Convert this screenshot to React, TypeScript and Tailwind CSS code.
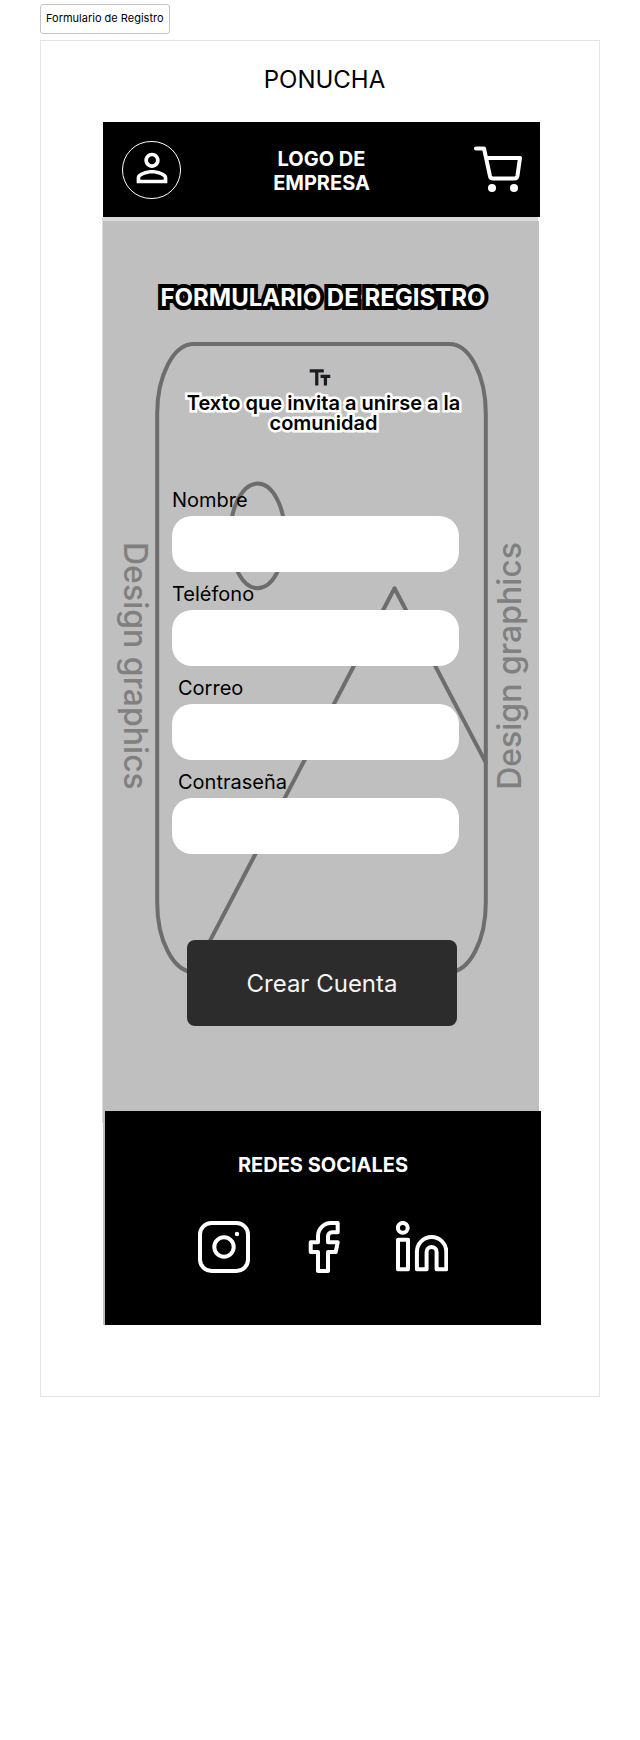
import React from "react";

type Field = {
  id: string;
  label: string;
  type: string;
  labelClass: string;
};

const fields: Field[] = [
  { id: "nombre", label: "Nombre", type: "text", labelClass: "" },
  { id: "telefono", label: "Teléfono", type: "tel", labelClass: "" },
  { id: "correo", label: "Correo", type: "email", labelClass: "pl-1.5" },
  { id: "contrasena", label: "Contraseña", type: "password", labelClass: "pl-1.5" },
];

function PersonIcon() {
  return (
    <svg viewBox="0 0 24 24" className="h-[46px] w-[46px]" fill="currentColor" aria-hidden="true">
      <path d="M12 5.9c1.16 0 2.1.94 2.1 2.1s-.94 2.1-2.1 2.1S9.9 9.16 9.9 8s.94-2.1 2.1-2.1m0 9c2.97 0 6.1 1.46 6.1 2.1v1.1H5.9V17c0-.64 3.13-2.1 6.1-2.1M12 4C9.79 4 8 5.79 8 8s1.79 4 4 4 4-1.79 4-4-1.79-4-4-4zm0 9c-2.67 0-8 1.34-8 4v3h16v-3c0-2.66-5.33-4-8-4z" />
    </svg>
  );
}

function CartIcon() {
  return (
    <svg viewBox="0 0 48 48" className="h-12 w-12" fill="none" aria-hidden="true">
      <path
        d="M2 2.5h8L16 30.2a3 3 0 0 0 2.9 2.3h21.6a3 3 0 0 0 2.9-2.4L46 12H12.4"
        stroke="currentColor"
        strokeWidth="4"
        strokeLinecap="round"
        strokeLinejoin="round"
      />
      <circle cx="18" cy="42" r="4" fill="currentColor" />
      <circle cx="40" cy="42" r="4" fill="currentColor" />
    </svg>
  );
}

function TextSizeIcon() {
  return (
    <svg viewBox="0 0 24 24" className="h-[26px] w-[26px]" fill="#1d1b20" aria-hidden="true">
      <path d="M2.5 4v3h5v12h3V7h5V4h-13zm19 5h-9v3h3v7h3v-7h3V9z" />
    </svg>
  );
}

function ImageBackdrop() {
  return (
    <svg
      viewBox="2.88 2.94 18.24 18.12"
      preserveAspectRatio="none"
      className="absolute inset-x-0 top-0 h-[632px] w-full"
      fill="none"
      stroke="#6d6d6d"
      strokeWidth="4"
      strokeLinecap="round"
      strokeLinejoin="round"
      aria-hidden="true"
    >
      <rect x="3" y="3" width="18" height="18" rx="2" ry="2" vectorEffect="non-scaling-stroke" />
      <circle cx="8.5" cy="8.5" r="1.5" vectorEffect="non-scaling-stroke" />
      <path d="M21 15 16 10 5 21" vectorEffect="non-scaling-stroke" />
    </svg>
  );
}

function SocialIcon({ children }: { children: React.ReactNode }) {
  return (
    <svg
      viewBox="0 0 52 52"
      className="h-[52px] w-[52px]"
      fill="none"
      stroke="currentColor"
      strokeWidth="4"
      strokeLinecap="round"
      strokeLinejoin="round"
      aria-hidden="true"
    >
      {children}
    </svg>
  );
}

function SideText({ flipped = false }: { flipped?: boolean }) {
  return (
    <p
      className={
        flipped
          ? "rotate-180 whitespace-nowrap text-[32px] leading-10 font-medium text-[#808080] [writing-mode:vertical-rl]"
          : "whitespace-nowrap text-[32px] leading-10 font-medium text-[#808080] [writing-mode:vertical-rl]"
      }
    >
      Design graphics
    </p>
  );
}

export default function App() {
  return (
    <div className="min-h-screen bg-white px-10 pt-1 font-['Inter',sans-serif] text-black">
      <div className="inline-flex h-[30px] items-center rounded-[3px] border border-[#c4c4c4] px-[5px] pb-px text-[11px]">
        Formulario de Registro
      </div>

      <div className="mt-[6px] border border-[#e5e5e5] pt-[23px] pr-[58px] pb-[71px] pl-[61px]">
        <h1 className="pl-[6px] text-center text-2xl">PONUCHA</h1>

        <header className="mx-px mt-[26px] grid h-[95px] grid-cols-[1fr_auto_1fr] items-center bg-black px-[18px] text-white">
          <button
            type="button"
            aria-label="Perfil"
            className="ml-px flex h-[58px] w-[59px] items-center justify-center rounded-full border border-white pb-[3px]"
          >
            <PersonIcon />
          </button>
          <p className="pt-[2px] text-center text-xl leading-6 font-bold">
            LOGO DE
            <br />
            EMPRESA
          </p>
          <button type="button" aria-label="Carrito" className="justify-self-end">
            <CartIcon />
          </button>
        </header>

        <div className="mr-[3px] h-1 bg-[#d9d9d9]" />

        <main className="mr-[2px] border-l border-[#d9d9d9] bg-[#bfbfbf] pt-[63px] pb-[85px]">
          <h2 className="pl-1 text-center text-2xl leading-7 font-bold whitespace-nowrap text-white [-webkit-text-stroke:8px_black] [paint-order:stroke_fill]">
            FORMULARIO DE REGISTRO
          </h2>

          <div className="mt-[30px] grid grid-cols-[52px_1fr_51px]">
            <div className="flex items-start justify-end pt-[200px]">
              <SideText />
            </div>

            <form className="relative" onSubmit={(e) => e.preventDefault()}>
              <ImageBackdrop />
              <div className="relative flex flex-col pt-[23px] pl-1">
                <div className="flex justify-center pr-2">
                  <TextSizeIcon />
                </div>
                <p className="mt-[2px] px-4 text-center text-xl leading-5 font-semibold [-webkit-text-stroke:5px_white] [paint-order:stroke_fill]">
                  Texto que invita a unirse a la comunidad
                </p>
                <div className="mt-[55px] flex flex-col gap-[10px] pr-[29px] pl-[13px]">
                  {fields.map((f) => (
                    <div key={f.id} className="flex flex-col gap-1">
                      <label htmlFor={f.id} className={`text-xl leading-6 ${f.labelClass}`}>
                        {f.label}
                      </label>
                      <input
                        id={f.id}
                        type={f.type}
                        className="h-14 w-full rounded-[20px] bg-white px-4 text-xl outline-none"
                      />
                    </div>
                  ))}
                </div>
                <button
                  type="submit"
                  className="mt-[86px] mr-[31px] ml-7 h-[86px] rounded-lg bg-[#2c2c2c] pt-[2px] text-2xl text-[#f5f5f5]"
                >
                  Crear Cuenta
                </button>
              </div>
            </form>

            <div className="flex items-start pt-[200px] pl-[2px]">
              <SideText flipped />
            </div>
          </div>
        </main>

        <div className="flex items-start">
          <div className="h-3 w-px bg-[#d9d9d9]" />
          <footer className="flex-1 border-l-2 border-[#bfbfbf] bg-black pt-[42px] pb-[52px] text-white">
            <h3 className="text-center text-xl leading-6 font-bold">REDES SOCIALES</h3>
            <nav aria-label="Redes sociales" className="mt-11 flex justify-center gap-[47px]">
              <a href="#instagram" aria-label="Instagram">
                <SocialIcon>
                  <rect x="2" y="2" width="48" height="48" rx="11.5" />
                  <circle cx="26" cy="26" r="9.7" />
                  <circle cx="39" cy="13" r="2.2" fill="currentColor" stroke="none" />
                </SocialIcon>
              </a>
              <a href="#facebook" aria-label="Facebook">
                <SocialIcon>
                  <path d="M40.7 2v9.3H35a4 4 0 0 0-4 4v6h9.7L38.7 31H31v19H21V31h-7.3v-9.7H21V15A13 13 0 0 1 34 2z" />
                </SocialIcon>
              </a>
              <a href="#linkedin" aria-label="LinkedIn">
                <SocialIcon>
                  <circle cx="6.8" cy="6.8" r="4.9" />
                  <path d="M2 18.7h10v29.6H2z" />
                  <path d="M20.9 48.3V30.8a14.7 14.7 0 0 1 29.4 0v17.5H40.6V31a5 5 0 0 0-10 0v17.3z" />
                </SocialIcon>
              </a>
            </nav>
          </footer>
        </div>
      </div>
    </div>
  );
}
